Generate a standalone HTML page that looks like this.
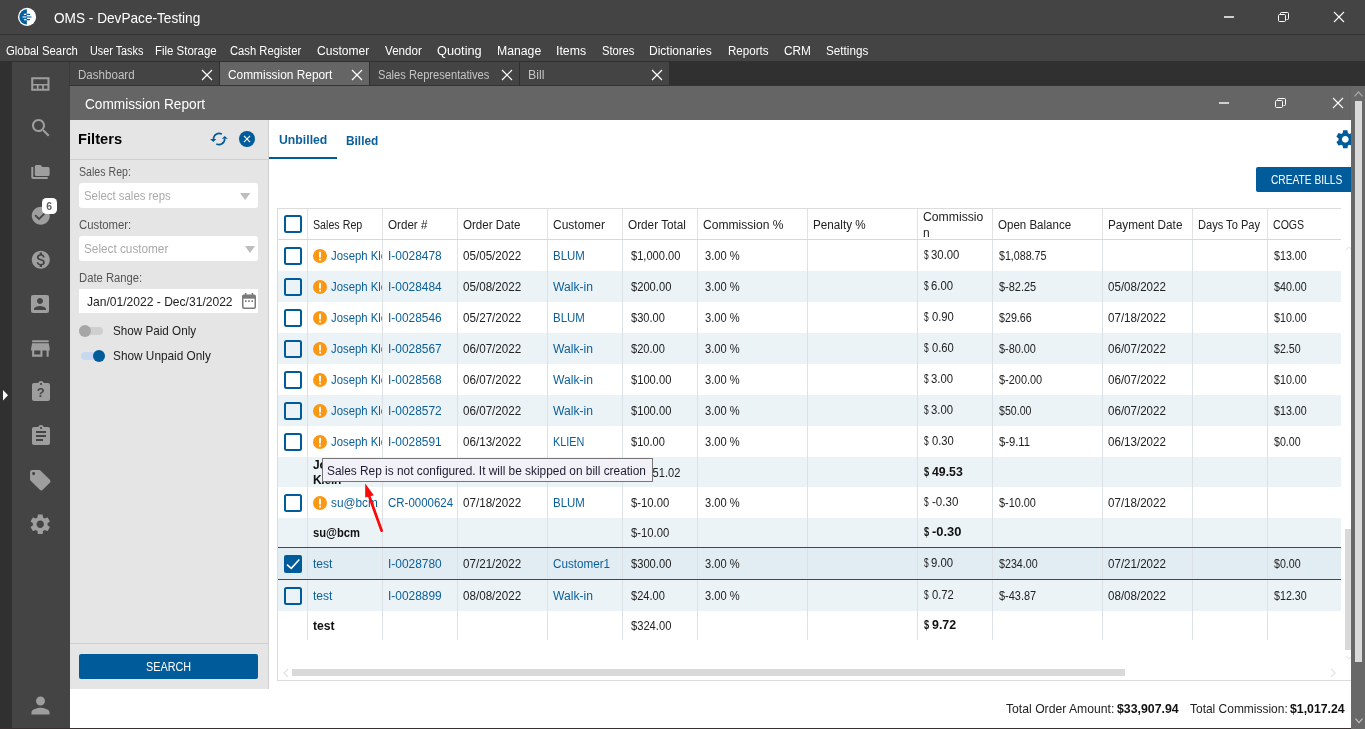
<!DOCTYPE html>
<html lang="en"><head><meta charset="utf-8"><title>OMS - DevPace-Testing</title>
<style>
html,body{margin:0;padding:0;}
body{width:1365px;height:729px;overflow:hidden;position:relative;background:#fff;font-family:"Liberation Sans", sans-serif;}
.t{position:absolute;white-space:pre;line-height:20px;height:20px;transform-origin:0 50%;}
svg{position:absolute;overflow:visible;}
#app{position:absolute;left:0;top:0;width:1365px;height:729px;overflow:hidden;will-change:transform;}
</style></head>
<body>
<div id="app">
<div style="position:absolute;left:0px;top:0px;width:1365px;height:35px;background:#444444;"></div>
<div style="position:absolute;left:0px;top:34px;width:1365px;height:1px;background:#333333;"></div>
<div style="position:absolute;left:0px;top:35px;width:1365px;height:26px;background:#444444;"></div>
<div style="position:absolute;left:0px;top:61px;width:1365px;height:668px;background:#303030;"></div>
<div style="position:absolute;left:12px;top:62px;width:58px;height:667px;background:#444444;"></div>
<div style="position:absolute;left:69px;top:62px;width:1px;height:24px;background:#3a3a3a;"></div>
<div style="position:absolute;left:70px;top:85px;width:1281px;height:1px;background:#333333;"></div>
<div style="position:absolute;left:70px;top:62px;width:149px;height:23px;background:#444444;"></div>
<div style="position:absolute;left:220px;top:62px;width:149px;height:23px;background:#656565;"></div>
<div style="position:absolute;left:370px;top:62px;width:149px;height:23px;background:#444444;"></div>
<div style="position:absolute;left:520px;top:62px;width:149px;height:23px;background:#444444;"></div>
<div style="position:absolute;left:70px;top:86px;width:1281px;height:34px;background:#656565;"></div>
<div style="position:absolute;left:70px;top:120px;width:1281px;height:609px;background:#ffffff;"></div>
<div style="position:absolute;left:70px;top:120px;width:198px;height:569px;background:#e5e5e5;"></div>
<div style="position:absolute;left:268px;top:120px;width:1px;height:569px;background:#cfcfcf;"></div>
<div style="position:absolute;left:70px;top:159px;width:198px;height:1px;background:#d0d0d0;"></div>
<div style="position:absolute;left:70px;top:643px;width:198px;height:1px;background:#d0d0d0;"></div>
<div style="position:absolute;left:0px;top:728px;width:1365px;height:1px;background:#3a2f2f;"></div>
<svg style="left:17px;top:7px" width="20" height="20" viewBox="0 0 20 20">
<circle cx="10.05" cy="9.9" r="9.1" fill="#ffffff"/>
<path d="M9.9 2.3 A7.6 7.6 0 0 0 9.9 17.5 Z" fill="#0560a0"/>
<g stroke-width="1.2" stroke-linecap="round"><path d="M7.4 7.45H9.9M7.4 12.6H9.9" stroke="#ffffff"/><path d="M9.9 7.45H12.6M9.9 12.6H12.6" stroke="#0560a0"/></g>
<g stroke-width="1.7" stroke-linecap="round" opacity="0.75"><path d="M6.2 10H9.9" stroke="#ffffff"/><path d="M9.9 10H13.8" stroke="#0560a0"/></g>
</svg>
<div style="position:absolute;left:1223.5px;top:16.1px;width:10.5px;height:1.6px;background:#cfcfcf"></div>
<svg style="left:1278px;top:12px" width="11" height="10" viewBox="0 0 11 10" fill="none" stroke="#ffffff" stroke-width="1">
<rect x="0.5" y="2.5" width="7" height="7" rx="1"/><path d="M2.5 2.5v-1a1 1 0 0 1 1-1h6a1 1 0 0 1 1 1v5a1 1 0 0 1 -1 1h-1"/></svg>
<svg style="left:1333.5px;top:12px" width="10" height="10" viewBox="0 0 10 10" stroke="#ffffff" stroke-width="1.1"><path d="M0 0L10 10M10 0L0 10"/></svg>
<div style="position:absolute;left:1218.5px;top:102.1px;width:10.5px;height:1.6px;background:#cfcfcf"></div>
<svg style="left:1275px;top:98px" width="11" height="10" viewBox="0 0 11 10" fill="none" stroke="#ffffff" stroke-width="1">
<rect x="0.5" y="2.5" width="7" height="7" rx="1"/><path d="M2.5 2.5v-1a1 1 0 0 1 1-1h6a1 1 0 0 1 1 1v5a1 1 0 0 1 -1 1h-1"/></svg>
<svg style="left:1332.5px;top:98px" width="10" height="10" viewBox="0 0 10 10" stroke="#ffffff" stroke-width="1.1"><path d="M0 0L10 10M10 0L0 10"/></svg>
<svg style="left:202px;top:69.7px" width="10" height="10" viewBox="0 0 10 10" stroke="#ffffff" stroke-width="1.2"><path d="M0 0L10 10M10 0L0 10"/></svg>
<svg style="left:352px;top:69.7px" width="10" height="10" viewBox="0 0 10 10" stroke="#ffffff" stroke-width="1.2"><path d="M0 0L10 10M10 0L0 10"/></svg>
<svg style="left:502px;top:69.7px" width="10" height="10" viewBox="0 0 10 10" stroke="#ffffff" stroke-width="1.2"><path d="M0 0L10 10M10 0L0 10"/></svg>
<svg style="left:652px;top:69.7px" width="10" height="10" viewBox="0 0 10 10" stroke="#ffffff" stroke-width="1.2"><path d="M0 0L10 10M10 0L0 10"/></svg>
<svg style="left:3px;top:389.5px" width="5" height="10.5" viewBox="0 0 5 10.5"><path d="M0 0L5 5.25L0 10.5Z" fill="#ffffff"/></svg>
<svg style="left:31.2px;top:76.9px" width="18.7" height="13.9" viewBox="0 0 18.3 13.9" preserveAspectRatio="none"><path fill="#9e9e9e" fill-rule="evenodd" d="M0.2 0.2H18.1V13.7H0.2Z M2.2 2.2V6.9H16.1V2.2Z M2.2 8.6V11.7H5.700V8.6Z M7.4 8.6V11.7H10.9V8.6Z M12.6 8.6V11.7H16.1V8.6Z"/></svg>
<svg style="left:28.5px;top:116px" width="24" height="24" viewBox="0 0 24 24" fill="#9e9e9e"><path d="M15.5 14h-.79l-.28-.27C15.41 12.59 16 11.11 16 9.5 16 5.91 13.09 3 9.5 3S3 5.91 3 9.5 5.91 16 9.5 16c1.61 0 3.09-.59 4.23-1.57l.27.28v.79l5 4.99L20.49 19l-4.99-5zm-6 0C7.01 14 5 11.99 5 9.5S7.01 5 9.5 5 14 7.01 14 9.5 11.99 14 9.5 14z"/></svg>
<svg style="left:30px;top:164px" width="21" height="16" viewBox="30 164 21 16" fill="#9e9e9e"><path d="M31.3 167H33.3V177.1H47.7V178.9H33a1.700 1.700 0 0 1-1.700-1.700Z"/><path d="M36.300 165.100H40.500L42.400 167H48.100a1.500 1.500 0 0 1 1.500 1.500V174.400a1.500 1.500 0 0 1-1.500 1.500H36.300a1.500 1.500 0 0 1-1.500-1.500V166.600a1.500 1.500 0 0 1 1.500-1.500Z"/></svg>
<svg style="left:29.5px;top:205.2px" width="21.6" height="21.6" viewBox="0 0 24 24" fill="#9e9e9e"><path d="M12 2C6.48 2 2 6.48 2 12s4.48 10 10 10 10-4.48 10-10S17.52 2 12 2zm-2 15l-5-5 1.41-1.41L10 14.17l7.59-7.59L19 8l-9 9z"/></svg>
<div style="position:absolute;left:42px;top:198.1px;width:15px;height:16.4px;background:#ffffff;border-radius:4.5px"></div>
<svg style="left:29.7px;top:249px" width="21.6" height="21.6" viewBox="0 0 24 24" fill="#9e9e9e"><path d="M12 2C6.48 2 2 6.48 2 12s4.48 10 10 10 10-4.48 10-10S17.52 2 12 2zm1.41 16.09V20h-2.67v-1.93c-1.71-.36-3.16-1.46-3.27-3.4h1.96c.1 1.05.82 1.87 2.65 1.87 1.96 0 2.4-.98 2.4-1.59 0-.83-.44-1.61-2.67-2.14-2.48-.6-4.18-1.62-4.18-3.67 0-1.72 1.39-2.84 3.11-3.21V4h2.67v1.95c1.86.45 2.79 1.86 2.85 3.39H14.3c-.05-1.11-.64-1.87-2.22-1.87-1.5 0-2.4.68-2.4 1.64 0 .84.65 1.39 2.67 1.91s4.18 1.39 4.18 3.91c-.01 1.83-1.38 2.83-3.12 3.16z"/></svg>
<svg style="left:28.4px;top:292px" width="24" height="24" viewBox="0 0 24 24" fill="#9e9e9e"><path d="M3 5v14c0 1.1.89 2 2 2h14c1.1 0 2-.9 2-2V5c0-1.1-.9-2-2-2H5c-1.11 0-2 .9-2 2zm12 4c0 1.66-1.34 3-3 3s-3-1.34-3-3 1.34-3 3-3 3 1.34 3 3zm-9 8c0-2 4-3.1 6-3.1s6 1.1 6 3.1v1H6v-1z"/></svg>
<svg style="left:28px;top:335.8px" width="24.8" height="24.8" viewBox="0 0 24 24" fill="#9e9e9e"><path d="M20 4H4v2h16V4zm1 10v-2l-1-5H4l-1 5v2h1v6h10v-6h4v6h2v-6h1zm-9 4H6v-4h6v4z"/></svg>
<svg style="left:28.5px;top:380px" width="24" height="24" viewBox="0 0 24 24" fill="#9e9e9e"><path d="M19 3h-4.18C14.4 1.84 13.3 1 12 1c-1.3 0-2.4.84-2.82 2H5c-1.1 0-2 .9-2 2v14c0 1.1.9 2 2 2h14c1.1 0 2-.9 2-2V5c0-1.1-.9-2-2-2zm-7 0c.55 0 1 .45 1 1s-.45 1-1 1-1-.45-1-1 .45-1 1-1z" fill-rule="evenodd"/></svg>
<svg style="left:28.5px;top:424px" width="24" height="24" viewBox="0 0 24 24" fill="#9e9e9e"><path d="M19 3h-4.18C14.4 1.84 13.3 1 12 1c-1.3 0-2.4.84-2.82 2H5c-1.1 0-2 .9-2 2v14c0 1.1.9 2 2 2h14c1.1 0 2-.9 2-2V5c0-1.1-.9-2-2-2zm-7 0c.55 0 1 .45 1 1s-.45 1-1 1-1-.45-1-1 .45-1 1-1zm2 14H7v-2h7v2zm3-4H7v-2h10v2zm0-4H7V7h10v2z"/></svg>
<svg style="left:28.05px;top:467.75px" width="24.5" height="24.5" viewBox="0 0 24 24" fill="#9e9e9e"><path d="M21.41 11.58l-9-9C12.05 2.22 11.55 2 11 2H4c-1.1 0-2 .9-2 2v7c0 .55.22 1.05.59 1.42l9 9c.36.36.86.58 1.41.58.55 0 1.05-.22 1.41-.59l7-7c.37-.36.59-.86.59-1.41 0-.55-.23-1.06-.59-1.42zM5.500 7C4.67 7 4 6.330 4 5.500S4.67 4 5.500 4 7 4.67 7 5.500 6.330 7 5.500 7z"/></svg>
<svg style="left:28.35px;top:511.85px" width="24.5" height="24.5" viewBox="0 0 24 24" fill="#9e9e9e"><path d="M19.14 12.94c.04-.3.06-.61.06-.94 0-.32-.02-.64-.07-.94l2.030-1.58c.18-.14.23-.41.12-.61l-1.920-3.320c-.12-.22-.37-.29-.59-.22l-2.390.96c-.5-.38-1.030-.7-1.620-.94l-.36-2.540c-.04-.24-.24-.41-.48-.41h-3.840c-.24 0-.43.17-.47.41l-.36 2.540c-.59.24-1.130.57-1.620.94l-2.390-.96c-.22-.08-.47 0-.59.22L2.740 8.870c-.12.210-.08.470.12.610l2.030 1.580c-.05.3-.09.630-.09.940s.02.640.07.940l-2.030 1.580c-.18.140-.23.410-.12.610l1.920 3.320c.12.220.37.290.59.220l2.390-.96c.5.380 1.030.7 1.620.94l.36 2.540c.05.240.24.410.48.410h3.840c.24 0 .44-.17.470-.41l.36-2.540c.59-.24 1.130-.56 1.620-.94l2.390.96c.22.080.47 0 .59-.22l1.920-3.320c.12-.22.070-.47-.12-.61l-2.010-1.580zM12 15.600c-1.980 0-3.600-1.620-3.600-3.600s1.620-3.600 3.600-3.600 3.600 1.620 3.600 3.600-1.620 3.600-3.600 3.600z"/></svg>
<svg style="left:27px;top:692px" width="27" height="27" viewBox="0 0 24 24" fill="#9e9e9e"><path d="M12 12c2.210 0 4-1.790 4-4s-1.790-4-4-4-4 1.790-4 4 1.790 4 4 4zm0 2c-2.670 0-8 1.340-8 4v2h16v-2c0-2.660-5.330-4-8-4z"/></svg>
<svg style="left:210px;top:131px" width="18" height="16" viewBox="0 0 18 16" fill="none" stroke="#005b9a" stroke-width="1.6">
<path d="M3.5 8.2A5.6 5.6 0 0 1 11.9 3.15"/><path d="M14.7 7.8A5.6 5.6 0 0 1 6.3 12.85"/>
<path d="M0.1 8L6.3 8L3.3 11.1Z" fill="#005b9a" stroke="none"/><path d="M14.7 4.9L17.8 7.8L11.9 7.8Z" fill="#005b9a" stroke="none"/></svg>
<svg style="left:239px;top:131px" width="16" height="16" viewBox="0 0 16 16"><circle cx="8" cy="8" r="8" fill="#005b9a"/>
<path d="M4.95 4.95L11.05 11.05M11.05 4.95L4.95 11.05" stroke="#ffffff" stroke-width="1.15"/></svg>
<div style="position:absolute;left:79px;top:183px;width:179px;height:25px;background:#ffffff;border-radius:3px;"></div>
<svg style="left:240.4px;top:193.3px" width="10.3" height="7" viewBox="0 0 10.3 7"><path d="M0 0H10.3L5.15 7Z" fill="#bdbdbd"/></svg>
<div style="position:absolute;left:79px;top:236px;width:179px;height:25px;background:#ffffff;border-radius:3px;"></div>
<svg style="left:244.5px;top:246.3px" width="10" height="7" viewBox="0 0 10 7"><path d="M0 0H10L5 7Z" fill="#bdbdbd"/></svg>
<div style="position:absolute;left:79px;top:289px;width:179px;height:24px;background:#ffffff;"></div>
<svg style="left:242px;top:293px" width="14" height="16" viewBox="0 0 14 16" fill="none" stroke="#7a7a7a">
<rect x="0.75" y="2.25" width="12.5" height="13" rx="1.2" stroke-width="1.5"/><path d="M0.75 4.2H13.25" stroke-width="3"/><path d="M3.6 0V3M10.4 0V3" stroke-width="1.6"/>
<path d="M3 8.200H4.600M6.200 8.200H7.800M9.400 8.200H11" stroke-width="1.700"/></svg>
<div style="position:absolute;left:79px;top:326.5px;width:24px;height:8px;background:#cfcfcf;border-radius:4px;"></div>
<div style="position:absolute;left:79px;top:324.5px;width:12px;height:12px;border-radius:6px;background:#a6a6a6"></div>
<div style="position:absolute;left:81px;top:351.5px;width:24px;height:8px;background:#c9d8f2;border-radius:4px;"></div>
<div style="position:absolute;left:93px;top:349.5px;width:12px;height:12px;border-radius:6px;background:#005b9a"></div>
<div style="position:absolute;left:79px;top:654px;width:179px;height:25px;background:#005b9a;border-radius:2px;"></div>
<div style="position:absolute;left:269px;top:157px;width:67.5px;height:2px;background:#005b9a;"></div>
<svg style="left:1333.7px;top:128.1px" width="22.6" height="22.6" viewBox="0 0 24 24" fill="#005b9a"><path d="M19.14 12.94c.04-.3.06-.61.06-.94 0-.32-.02-.64-.07-.94l2.030-1.58c.18-.14.23-.41.12-.61l-1.920-3.320c-.12-.22-.37-.29-.59-.22l-2.390.96c-.5-.38-1.030-.7-1.620-.94l-.36-2.540c-.04-.24-.24-.41-.48-.41h-3.840c-.24 0-.43.17-.47.41l-.36 2.540c-.59.24-1.130.57-1.620.94l-2.390-.96c-.22-.08-.47 0-.59.22L2.740 8.870c-.12.210-.08.470.12.610l2.030 1.580c-.05.3-.09.630-.09.940s.02.640.07.940l-2.030 1.580c-.18.140-.23.410-.12.610l1.920 3.320c.12.220.37.290.59.220l2.390-.96c.5.380 1.030.7 1.620.94l.36 2.540c.05.240.24.410.48.410h3.840c.24 0 .44-.17.470-.41l.36-2.540c.59-.24 1.130-.56 1.620-.94l2.390.96c.22.080.47 0 .59-.22l1.920-3.320c.12-.22.070-.47-.12-.61l-2.010-1.580zM12 15.600c-1.980 0-3.600-1.620-3.600-3.600s1.620-3.600 3.600-3.600 3.600 1.620 3.600 3.600-1.620 3.600-3.600 3.600z"/></svg>
<div style="position:absolute;left:1256px;top:167px;width:110px;height:25px;background:#005b9a;border-radius:2px;"></div>
<div style="position:absolute;left:277px;top:208px;width:1064px;height:1px;background:#dcdcdc;"></div>
<div style="position:absolute;left:277px;top:208px;width:1px;height:472px;background:#dcdcdc;"></div>
<div style="position:absolute;left:277px;top:679.5px;width:1090px;height:1px;background:#dcdcdc;"></div>
<div style="position:absolute;left:278px;top:239px;width:1063px;height:1px;background:#d9d9d9;"></div>
<div style="position:absolute;left:278px;top:271px;width:1063px;height:31px;background:#ebf3f7;"></div>
<div style="position:absolute;left:278px;top:333px;width:1063px;height:31px;background:#ebf3f7;"></div>
<div style="position:absolute;left:278px;top:395px;width:1063px;height:31px;background:#ebf3f7;"></div>
<div style="position:absolute;left:278px;top:457px;width:1063px;height:30px;background:#ebf3f7;"></div>
<div style="position:absolute;left:278px;top:518px;width:1063px;height:30px;background:#ebf3f7;"></div>
<div style="position:absolute;left:278px;top:548px;width:1063px;height:31px;background:#e1ecf3;"></div>
<div style="position:absolute;left:278px;top:579px;width:1063px;height:32px;background:#ebf3f7;"></div>
<div style="position:absolute;left:307px;top:209px;width:1px;height:30px;background:#e0e2e4;"></div>
<div style="position:absolute;left:307px;top:240px;width:1px;height:400px;background:#dce1e5;"></div>
<div style="position:absolute;left:382px;top:209px;width:1px;height:30px;background:#e0e2e4;"></div>
<div style="position:absolute;left:382px;top:240px;width:1px;height:400px;background:#dce1e5;"></div>
<div style="position:absolute;left:457px;top:209px;width:1px;height:30px;background:#e0e2e4;"></div>
<div style="position:absolute;left:457px;top:240px;width:1px;height:400px;background:#dce1e5;"></div>
<div style="position:absolute;left:547px;top:209px;width:1px;height:30px;background:#e0e2e4;"></div>
<div style="position:absolute;left:547px;top:240px;width:1px;height:400px;background:#dce1e5;"></div>
<div style="position:absolute;left:622px;top:209px;width:1px;height:30px;background:#e0e2e4;"></div>
<div style="position:absolute;left:622px;top:240px;width:1px;height:400px;background:#dce1e5;"></div>
<div style="position:absolute;left:697px;top:209px;width:1px;height:30px;background:#e0e2e4;"></div>
<div style="position:absolute;left:697px;top:240px;width:1px;height:400px;background:#dce1e5;"></div>
<div style="position:absolute;left:807px;top:209px;width:1px;height:30px;background:#e0e2e4;"></div>
<div style="position:absolute;left:807px;top:240px;width:1px;height:400px;background:#dce1e5;"></div>
<div style="position:absolute;left:917px;top:209px;width:1px;height:30px;background:#e0e2e4;"></div>
<div style="position:absolute;left:917px;top:240px;width:1px;height:400px;background:#dce1e5;"></div>
<div style="position:absolute;left:992px;top:209px;width:1px;height:30px;background:#e0e2e4;"></div>
<div style="position:absolute;left:992px;top:240px;width:1px;height:400px;background:#dce1e5;"></div>
<div style="position:absolute;left:1102px;top:209px;width:1px;height:30px;background:#e0e2e4;"></div>
<div style="position:absolute;left:1102px;top:240px;width:1px;height:400px;background:#dce1e5;"></div>
<div style="position:absolute;left:1192px;top:209px;width:1px;height:30px;background:#e0e2e4;"></div>
<div style="position:absolute;left:1192px;top:240px;width:1px;height:400px;background:#dce1e5;"></div>
<div style="position:absolute;left:1267px;top:209px;width:1px;height:30px;background:#e0e2e4;"></div>
<div style="position:absolute;left:1267px;top:240px;width:1px;height:400px;background:#dce1e5;"></div>
<div style="position:absolute;left:278px;top:547px;width:1063px;height:1px;background:#005b9a;"></div>
<div style="position:absolute;left:278px;top:579px;width:1063px;height:1px;background:#005b9a;"></div>
<div style="position:absolute;left:284px;top:215px;width:14px;height:14px;border:2px solid #005b9a;border-radius:2.5px"></div>
<div style="position:absolute;left:284px;top:247px;width:14px;height:14px;border:2px solid #005b9a;border-radius:2.5px"></div>
<svg style="left:313px;top:248.5px" width="14" height="14" viewBox="0 0 14 14"><circle cx="7" cy="7" r="7" fill="#fb9712"/><path d="M7 2.7V8.4" stroke="#ffffff" stroke-width="1.9"/><rect x="6.05" y="9.6" width="1.9" height="1.9" fill="#ffffff"/></svg>
<div style="position:absolute;left:284px;top:278px;width:14px;height:14px;border:2px solid #005b9a;border-radius:2.5px"></div>
<svg style="left:313px;top:279.5px" width="14" height="14" viewBox="0 0 14 14"><circle cx="7" cy="7" r="7" fill="#fb9712"/><path d="M7 2.7V8.4" stroke="#ffffff" stroke-width="1.9"/><rect x="6.05" y="9.6" width="1.9" height="1.9" fill="#ffffff"/></svg>
<div style="position:absolute;left:284px;top:309px;width:14px;height:14px;border:2px solid #005b9a;border-radius:2.5px"></div>
<svg style="left:313px;top:310.5px" width="14" height="14" viewBox="0 0 14 14"><circle cx="7" cy="7" r="7" fill="#fb9712"/><path d="M7 2.7V8.4" stroke="#ffffff" stroke-width="1.9"/><rect x="6.05" y="9.6" width="1.9" height="1.9" fill="#ffffff"/></svg>
<div style="position:absolute;left:284px;top:340px;width:14px;height:14px;border:2px solid #005b9a;border-radius:2.5px"></div>
<svg style="left:313px;top:341.5px" width="14" height="14" viewBox="0 0 14 14"><circle cx="7" cy="7" r="7" fill="#fb9712"/><path d="M7 2.7V8.4" stroke="#ffffff" stroke-width="1.9"/><rect x="6.05" y="9.6" width="1.9" height="1.9" fill="#ffffff"/></svg>
<div style="position:absolute;left:284px;top:371px;width:14px;height:14px;border:2px solid #005b9a;border-radius:2.5px"></div>
<svg style="left:313px;top:372.5px" width="14" height="14" viewBox="0 0 14 14"><circle cx="7" cy="7" r="7" fill="#fb9712"/><path d="M7 2.7V8.4" stroke="#ffffff" stroke-width="1.9"/><rect x="6.05" y="9.6" width="1.9" height="1.9" fill="#ffffff"/></svg>
<div style="position:absolute;left:284px;top:402px;width:14px;height:14px;border:2px solid #005b9a;border-radius:2.5px"></div>
<svg style="left:313px;top:403.5px" width="14" height="14" viewBox="0 0 14 14"><circle cx="7" cy="7" r="7" fill="#fb9712"/><path d="M7 2.7V8.4" stroke="#ffffff" stroke-width="1.9"/><rect x="6.05" y="9.6" width="1.9" height="1.9" fill="#ffffff"/></svg>
<div style="position:absolute;left:284px;top:433px;width:14px;height:14px;border:2px solid #005b9a;border-radius:2.5px"></div>
<svg style="left:313px;top:434.5px" width="14" height="14" viewBox="0 0 14 14"><circle cx="7" cy="7" r="7" fill="#fb9712"/><path d="M7 2.7V8.4" stroke="#ffffff" stroke-width="1.9"/><rect x="6.05" y="9.6" width="1.9" height="1.9" fill="#ffffff"/></svg>
<div style="position:absolute;left:284px;top:494px;width:14px;height:14px;border:2px solid #005b9a;border-radius:2.5px"></div>
<svg style="left:313px;top:495.5px" width="14" height="14" viewBox="0 0 14 14"><circle cx="7" cy="7" r="7" fill="#fb9712"/><path d="M7 2.7V8.4" stroke="#ffffff" stroke-width="1.9"/><rect x="6.05" y="9.6" width="1.9" height="1.9" fill="#ffffff"/></svg>
<svg style="left:284px;top:555px" width="18" height="18" viewBox="0 0 18 18"><rect width="18" height="18" rx="2" fill="#005b9a"/><path d="M2.9 9.6L7.3 13.3L15.3 4.5" fill="none" stroke="#ffffff" stroke-width="1.6"/></svg>
<div style="position:absolute;left:284px;top:587px;width:14px;height:14px;border:2px solid #005b9a;border-radius:2.5px"></div>
<div style="position:absolute;left:292px;top:669px;width:833px;height:7px;background:#d9d9d9;"></div>
<div style="position:absolute;left:1345px;top:529px;width:7px;height:121px;background:#d9d9d9;"></div>
<svg style="left:283px;top:667.5px" width="6" height="10" viewBox="0 0 6 10" fill="none" stroke="#e2e2e2" stroke-width="1.2"><path d="M5 0.8L1 5L5 9.2"/></svg>
<svg style="left:1330px;top:667.5px" width="6" height="10" viewBox="0 0 6 10" fill="none" stroke="#e2e2e2" stroke-width="1.2"><path d="M1 0.8L5 5L1 9.2"/></svg>
<svg style="left:1344.5px;top:245.5px" width="8" height="5" viewBox="0 0 9 6" fill="none" stroke="#e2e2e2" stroke-width="1.2"><path d="M0.5 5.3L4.5 1L8.5 5.3"/></svg>
<svg style="left:1344.5px;top:655px" width="8" height="5" viewBox="0 0 9 6" fill="none" stroke="#e2e2e2" stroke-width="1.2"><path d="M0.5 0.7L4.5 5L8.5 0.7"/></svg>
<span class="t" style="left:53.55px;top:8.1px;font-size:15px;color:#ffffff;transform:scaleX(0.9091);">OMS - DevPace-Testing</span>
<span class="t" style="left:6.03px;top:40.9px;font-size:12px;color:#ffffff;transform:scaleX(0.9453);">Global Search</span>
<span class="t" style="left:89.62px;top:40.9px;font-size:12px;color:#ffffff;transform:scaleX(0.9017);">User Tasks</span>
<span class="t" style="left:154.69px;top:40.9px;font-size:12px;color:#ffffff;transform:scaleX(0.9528);">File Storage</span>
<span class="t" style="left:229.83px;top:40.9px;font-size:12px;color:#ffffff;transform:scaleX(0.9364);">Cash Register</span>
<span class="t" style="left:316.9px;top:40.9px;font-size:12px;color:#ffffff;transform:scaleX(1.0058);">Customer</span>
<span class="t" style="left:385.1px;top:40.9px;font-size:12px;color:#ffffff;transform:scaleX(0.9711);">Vendor</span>
<span class="t" style="left:437.37px;top:40.9px;font-size:12px;color:#ffffff;transform:scaleX(1.0634);">Quoting</span>
<span class="t" style="left:497.13px;top:40.9px;font-size:12px;color:#ffffff;transform:scaleX(1.0201);">Manage</span>
<span class="t" style="left:556.33px;top:40.9px;font-size:12px;color:#ffffff;transform:scaleX(1.0265);">Items</span>
<span class="t" style="left:601.73px;top:40.9px;font-size:12px;color:#ffffff;transform:scaleX(0.9324);">Stores</span>
<span class="t" style="left:649.45px;top:40.9px;font-size:12px;color:#ffffff;transform:scaleX(0.9992);">Dictionaries</span>
<span class="t" style="left:727.58px;top:40.9px;font-size:12px;color:#ffffff;transform:scaleX(0.9634);">Reports</span>
<span class="t" style="left:783.71px;top:40.9px;font-size:12px;color:#ffffff;transform:scaleX(0.9846);">CRM</span>
<span class="t" style="left:825.91px;top:40.9px;font-size:12px;color:#ffffff;transform:scaleX(0.9741);">Settings</span>
<span class="t" style="left:77.88px;top:64.7px;font-size:12px;color:#c4c4c4;transform:scaleX(0.9652);">Dashboard</span>
<span class="t" style="left:228.1px;top:64.7px;font-size:12px;color:#ffffff;transform:scaleX(0.9905);">Commission Report</span>
<span class="t" style="left:378.14px;top:64.7px;font-size:12px;color:#c4c4c4;transform:scaleX(0.9275);">Sales Representatives</span>
<span class="t" style="left:527.83px;top:64.7px;font-size:12px;color:#c4c4c4;transform:scaleX(1.0305);">Bill</span>
<span class="t" style="left:84.51px;top:94.3px;font-size:14px;color:#ffffff;transform:scaleX(0.9763);">Commission Report</span>
<span class="t" style="left:46.35px;top:196.3px;font-size:10.5px;color:#606060;font-weight:700;">6</span>
<span class="t" style="left:36.7px;top:383.3px;font-size:13px;color:#444444;font-weight:700;">?</span>
<span class="t" style="left:78.32px;top:129.4px;font-size:15px;color:#000000;font-weight:700;transform:scaleX(0.9793);">Filters</span>
<span class="t" style="left:78.86px;top:162.2px;font-size:12px;color:#555555;transform:scaleX(0.8838);">Sales Rep:</span>
<span class="t" style="left:83.53px;top:185.8px;font-size:12px;color:#a9a9a9;transform:scaleX(0.9492);">Select sales reps</span>
<span class="t" style="left:78.83px;top:215.1px;font-size:12px;color:#555555;transform:scaleX(0.9444);">Customer:</span>
<span class="t" style="left:83.51px;top:238.7px;font-size:12px;color:#a9a9a9;transform:scaleX(0.9801);">Select customer</span>
<span class="t" style="left:78.8px;top:268.1px;font-size:12px;color:#555555;transform:scaleX(0.9384);">Date Range:</span>
<span class="t" style="left:86.67px;top:291.6px;font-size:13px;color:#222222;transform:scaleX(0.9282);">Jan/01/2022 - Dec/31/2022</span>
<span class="t" style="left:112.75px;top:320.6px;font-size:13px;color:#222222;transform:scaleX(0.8989);">Show Paid Only</span>
<span class="t" style="left:112.75px;top:345.6px;font-size:13px;color:#222222;transform:scaleX(0.9091);">Show Unpaid Only</span>
<span class="t" style="left:146.35px;top:656.6px;font-size:12px;color:#ffffff;transform:scaleX(0.9026);">SEARCH</span>
<span class="t" style="left:278.69px;top:129.6px;font-size:13px;color:#0b5f99;font-weight:700;transform:scaleX(0.9427);">Unbilled</span>
<span class="t" style="left:346.42px;top:130.6px;font-size:13px;color:#0b5f99;font-weight:700;transform:scaleX(0.9126);">Billed</span>
<span class="t" style="left:1271.08px;top:169.7px;font-size:12px;color:#ffffff;transform:scaleX(0.8494);">CREATE BILLS</span>
<span class="t" style="left:312.56px;top:214.8px;font-size:12px;color:#222222;transform:scaleX(0.8899);">Sales Rep</span>
<span class="t" style="left:388.02px;top:214.8px;font-size:12px;color:#222222;transform:scaleX(0.9689);">Order #</span>
<span class="t" style="left:462.92px;top:214.8px;font-size:12px;color:#222222;transform:scaleX(0.9658);">Order Date</span>
<span class="t" style="left:552.9px;top:214.8px;font-size:12px;color:#222222;transform:scaleX(0.9981);">Customer</span>
<span class="t" style="left:628.11px;top:214.8px;font-size:12px;color:#222222;transform:scaleX(0.9803);">Order Total</span>
<span class="t" style="left:702.9px;top:214.8px;font-size:12px;color:#222222;transform:scaleX(1.0057);">Commission %</span>
<span class="t" style="left:812.67px;top:214.8px;font-size:12px;color:#222222;transform:scaleX(0.9755);">Penalty %</span>
<span class="t" style="left:998.12px;top:214.8px;font-size:12px;color:#222222;transform:scaleX(0.9608);">Open Balance</span>
<span class="t" style="left:1107.57px;top:214.8px;font-size:12px;color:#222222;transform:scaleX(0.9787);">Payment Date</span>
<span class="t" style="left:1197.91px;top:214.8px;font-size:12px;color:#222222;transform:scaleX(0.9233);">Days To Pay</span>
<span class="t" style="left:1273.06px;top:214.8px;font-size:12px;color:#222222;transform:scaleX(0.8812);">COGS</span>
<span class="t" style="left:922.89px;top:207px;font-size:12px;color:#222222;transform:scaleX(1.0171);">Commissio</span>
<span class="t" style="left:922.9px;top:222.6px;font-size:12px;color:#222222;">n</span>
<span class="t" style="left:331.0px;top:245.8px;font-size:12px;color:#0b5f99;transform:scaleX(0.9451);width:53.96px;overflow:hidden;">Joseph Klein</span>
<span class="t" style="left:387.65px;top:245.8px;font-size:12px;color:#0b5f99;transform:scaleX(0.9943);">I-0028478</span>
<span class="t" style="left:462.56px;top:245.8px;font-size:12px;color:#222222;transform:scaleX(0.9697);">05/05/2022</span>
<span class="t" style="left:552.69px;top:245.8px;font-size:12px;color:#0b5f99;transform:scaleX(0.9531);">BLUM</span>
<span class="t" style="left:630.8px;top:245.8px;font-size:12px;color:#222222;transform:scaleX(0.9255);">$1,000.00</span>
<span class="t" style="left:704.64px;top:245.8px;font-size:12px;color:#222222;transform:scaleX(0.9288);">3.00 %</span>
<span class="t" style="left:923.7px;top:245px;font-size:12px;color:#222222;transform:scaleX(0.6963);">$</span>
<span class="t" style="left:931.43px;top:245px;font-size:12px;color:#222222;transform:scaleX(0.947);">30.00</span>
<span class="t" style="left:998.6px;top:245.8px;font-size:12px;color:#222222;transform:scaleX(0.8885);">$1,088.75</span>
<span class="t" style="left:1273.5px;top:245.8px;font-size:12px;color:#222222;transform:scaleX(0.8904);">$13.00</span>
<span class="t" style="left:331.0px;top:276.8px;font-size:12px;color:#0b5f99;transform:scaleX(0.9451);width:53.96px;overflow:hidden;">Joseph Klein</span>
<span class="t" style="left:387.65px;top:276.8px;font-size:12px;color:#0b5f99;transform:scaleX(0.9943);">I-0028484</span>
<span class="t" style="left:462.56px;top:276.8px;font-size:12px;color:#222222;transform:scaleX(0.9697);">05/08/2022</span>
<span class="t" style="left:553.4px;top:276.8px;font-size:12px;color:#0b5f99;transform:scaleX(1.0128);">Walk-in</span>
<span class="t" style="left:630.8px;top:276.8px;font-size:12px;color:#222222;transform:scaleX(0.9302);">$200.00</span>
<span class="t" style="left:704.64px;top:276.8px;font-size:12px;color:#222222;transform:scaleX(0.9288);">3.00 %</span>
<span class="t" style="left:923.7px;top:276px;font-size:12px;color:#222222;transform:scaleX(0.6963);">$</span>
<span class="t" style="left:931.43px;top:276px;font-size:12px;color:#222222;transform:scaleX(0.9444);">6.00</span>
<span class="t" style="left:998.6px;top:276.8px;font-size:12px;color:#222222;transform:scaleX(0.913);">$-82.25</span>
<span class="t" style="left:1108.06px;top:276.8px;font-size:12px;color:#222222;transform:scaleX(0.9647);">05/08/2022</span>
<span class="t" style="left:1273.5px;top:276.8px;font-size:12px;color:#222222;transform:scaleX(0.8904);">$40.00</span>
<span class="t" style="left:331.0px;top:307.8px;font-size:12px;color:#0b5f99;transform:scaleX(0.9451);width:53.96px;overflow:hidden;">Joseph Klein</span>
<span class="t" style="left:387.65px;top:307.8px;font-size:12px;color:#0b5f99;transform:scaleX(0.9943);">I-0028546</span>
<span class="t" style="left:462.56px;top:307.8px;font-size:12px;color:#222222;transform:scaleX(0.9697);">05/27/2022</span>
<span class="t" style="left:552.69px;top:307.8px;font-size:12px;color:#0b5f99;transform:scaleX(0.9531);">BLUM</span>
<span class="t" style="left:630.8px;top:307.8px;font-size:12px;color:#222222;transform:scaleX(0.9219);">$30.00</span>
<span class="t" style="left:704.64px;top:307.8px;font-size:12px;color:#222222;transform:scaleX(0.9288);">3.00 %</span>
<span class="t" style="left:923.7px;top:307px;font-size:12px;color:#222222;transform:scaleX(0.6963);">$</span>
<span class="t" style="left:931.67px;top:307px;font-size:12px;color:#222222;transform:scaleX(0.9341);">0.90</span>
<span class="t" style="left:998.6px;top:307.8px;font-size:12px;color:#222222;transform:scaleX(0.8897);">$29.66</span>
<span class="t" style="left:1108.06px;top:307.8px;font-size:12px;color:#222222;transform:scaleX(0.9647);">07/18/2022</span>
<span class="t" style="left:1273.5px;top:307.8px;font-size:12px;color:#222222;transform:scaleX(0.8904);">$10.00</span>
<span class="t" style="left:331.0px;top:338.8px;font-size:12px;color:#0b5f99;transform:scaleX(0.9451);width:53.96px;overflow:hidden;">Joseph Klein</span>
<span class="t" style="left:387.65px;top:338.8px;font-size:12px;color:#0b5f99;transform:scaleX(0.9943);">I-0028567</span>
<span class="t" style="left:462.56px;top:338.8px;font-size:12px;color:#222222;transform:scaleX(0.9697);">06/07/2022</span>
<span class="t" style="left:553.4px;top:338.8px;font-size:12px;color:#0b5f99;transform:scaleX(1.0128);">Walk-in</span>
<span class="t" style="left:630.8px;top:338.8px;font-size:12px;color:#222222;transform:scaleX(0.9219);">$20.00</span>
<span class="t" style="left:704.64px;top:338.8px;font-size:12px;color:#222222;transform:scaleX(0.9288);">3.00 %</span>
<span class="t" style="left:923.7px;top:338px;font-size:12px;color:#222222;transform:scaleX(0.6963);">$</span>
<span class="t" style="left:931.67px;top:338px;font-size:12px;color:#222222;transform:scaleX(0.9341);">0.60</span>
<span class="t" style="left:998.6px;top:338.8px;font-size:12px;color:#222222;transform:scaleX(0.9074);">$-80.00</span>
<span class="t" style="left:1108.06px;top:338.8px;font-size:12px;color:#222222;transform:scaleX(0.9647);">06/07/2022</span>
<span class="t" style="left:1273.5px;top:338.8px;font-size:12px;color:#222222;transform:scaleX(0.8867);">$2.50</span>
<span class="t" style="left:331.0px;top:369.8px;font-size:12px;color:#0b5f99;transform:scaleX(0.9451);width:53.96px;overflow:hidden;">Joseph Klein</span>
<span class="t" style="left:387.65px;top:369.8px;font-size:12px;color:#0b5f99;transform:scaleX(0.9943);">I-0028568</span>
<span class="t" style="left:462.56px;top:369.8px;font-size:12px;color:#222222;transform:scaleX(0.9697);">06/07/2022</span>
<span class="t" style="left:553.4px;top:369.8px;font-size:12px;color:#0b5f99;transform:scaleX(1.0128);">Walk-in</span>
<span class="t" style="left:630.8px;top:369.8px;font-size:12px;color:#222222;transform:scaleX(0.9302);">$100.00</span>
<span class="t" style="left:704.64px;top:369.8px;font-size:12px;color:#222222;transform:scaleX(0.9288);">3.00 %</span>
<span class="t" style="left:923.7px;top:369px;font-size:12px;color:#222222;transform:scaleX(0.6963);">$</span>
<span class="t" style="left:931.43px;top:369px;font-size:12px;color:#222222;transform:scaleX(0.9444);">3.00</span>
<span class="t" style="left:998.6px;top:369.8px;font-size:12px;color:#222222;transform:scaleX(0.9111);">$-200.00</span>
<span class="t" style="left:1108.06px;top:369.8px;font-size:12px;color:#222222;transform:scaleX(0.9647);">06/07/2022</span>
<span class="t" style="left:1273.5px;top:369.8px;font-size:12px;color:#222222;transform:scaleX(0.8904);">$10.00</span>
<span class="t" style="left:331.0px;top:400.8px;font-size:12px;color:#0b5f99;transform:scaleX(0.9451);width:53.96px;overflow:hidden;">Joseph Klein</span>
<span class="t" style="left:387.65px;top:400.8px;font-size:12px;color:#0b5f99;transform:scaleX(0.9943);">I-0028572</span>
<span class="t" style="left:462.56px;top:400.8px;font-size:12px;color:#222222;transform:scaleX(0.9697);">06/07/2022</span>
<span class="t" style="left:553.4px;top:400.8px;font-size:12px;color:#0b5f99;transform:scaleX(1.0128);">Walk-in</span>
<span class="t" style="left:630.8px;top:400.8px;font-size:12px;color:#222222;transform:scaleX(0.9302);">$100.00</span>
<span class="t" style="left:704.64px;top:400.8px;font-size:12px;color:#222222;transform:scaleX(0.9288);">3.00 %</span>
<span class="t" style="left:923.7px;top:400px;font-size:12px;color:#222222;transform:scaleX(0.6963);">$</span>
<span class="t" style="left:931.43px;top:400px;font-size:12px;color:#222222;transform:scaleX(0.9444);">3.00</span>
<span class="t" style="left:998.6px;top:400.8px;font-size:12px;color:#222222;transform:scaleX(0.8836);">$50.00</span>
<span class="t" style="left:1108.06px;top:400.8px;font-size:12px;color:#222222;transform:scaleX(0.9647);">06/07/2022</span>
<span class="t" style="left:1273.5px;top:400.8px;font-size:12px;color:#222222;transform:scaleX(0.8904);">$13.00</span>
<span class="t" style="left:331.0px;top:431.8px;font-size:12px;color:#0b5f99;transform:scaleX(0.9451);width:53.96px;overflow:hidden;">Joseph Klein</span>
<span class="t" style="left:387.65px;top:431.8px;font-size:12px;color:#0b5f99;transform:scaleX(0.9943);">I-0028591</span>
<span class="t" style="left:462.56px;top:431.8px;font-size:12px;color:#222222;transform:scaleX(0.9697);">06/13/2022</span>
<span class="t" style="left:552.72px;top:431.8px;font-size:12px;color:#0b5f99;transform:scaleX(0.9053);">KLIEN</span>
<span class="t" style="left:630.8px;top:431.8px;font-size:12px;color:#222222;transform:scaleX(0.9219);">$10.00</span>
<span class="t" style="left:704.64px;top:431.8px;font-size:12px;color:#222222;transform:scaleX(0.9288);">3.00 %</span>
<span class="t" style="left:923.7px;top:431px;font-size:12px;color:#222222;transform:scaleX(0.6963);">$</span>
<span class="t" style="left:931.67px;top:431px;font-size:12px;color:#222222;transform:scaleX(0.9341);">0.30</span>
<span class="t" style="left:998.6px;top:431.8px;font-size:12px;color:#222222;transform:scaleX(0.9368);">$-9.11</span>
<span class="t" style="left:1108.06px;top:431.8px;font-size:12px;color:#222222;transform:scaleX(0.9647);">06/13/2022</span>
<span class="t" style="left:1273.5px;top:431.8px;font-size:12px;color:#222222;transform:scaleX(0.8867);">$0.00</span>
<span class="t" style="left:330.75px;top:492.8px;font-size:12px;color:#0b5f99;transform:scaleX(0.984);">su@bcm</span>
<span class="t" style="left:387.92px;top:492.8px;font-size:12px;color:#0b5f99;transform:scaleX(0.9561);">CR-0000624</span>
<span class="t" style="left:462.56px;top:492.8px;font-size:12px;color:#222222;transform:scaleX(0.9697);">07/18/2022</span>
<span class="t" style="left:552.69px;top:492.8px;font-size:12px;color:#0b5f99;transform:scaleX(0.9531);">BLUM</span>
<span class="t" style="left:630.8px;top:492.8px;font-size:12px;color:#222222;transform:scaleX(0.942);">$-10.00</span>
<span class="t" style="left:704.64px;top:492.8px;font-size:12px;color:#222222;transform:scaleX(0.9288);">3.00 %</span>
<span class="t" style="left:923.7px;top:492px;font-size:12px;color:#222222;transform:scaleX(0.6963);">$</span>
<span class="t" style="left:931.66px;top:492px;font-size:12px;color:#222222;transform:scaleX(0.9626);">-0.30</span>
<span class="t" style="left:998.6px;top:492.8px;font-size:12px;color:#222222;transform:scaleX(0.9074);">$-10.00</span>
<span class="t" style="left:1108.06px;top:492.8px;font-size:12px;color:#222222;transform:scaleX(0.9647);">07/18/2022</span>
<span class="t" style="left:313.2px;top:553.8px;font-size:12px;color:#0b5f99;transform:scaleX(1.0051);">test</span>
<span class="t" style="left:387.65px;top:553.8px;font-size:12px;color:#0b5f99;transform:scaleX(0.9943);">I-0028780</span>
<span class="t" style="left:462.56px;top:553.8px;font-size:12px;color:#222222;transform:scaleX(0.9697);">07/21/2022</span>
<span class="t" style="left:552.91px;top:553.8px;font-size:12px;color:#0b5f99;transform:scaleX(0.9732);">Customer1</span>
<span class="t" style="left:630.8px;top:553.8px;font-size:12px;color:#222222;transform:scaleX(0.9302);">$300.00</span>
<span class="t" style="left:704.64px;top:553.8px;font-size:12px;color:#222222;transform:scaleX(0.9288);">3.00 %</span>
<span class="t" style="left:923.7px;top:553px;font-size:12px;color:#222222;transform:scaleX(0.6963);">$</span>
<span class="t" style="left:931.43px;top:553px;font-size:12px;color:#222222;transform:scaleX(0.9444);">9.00</span>
<span class="t" style="left:998.6px;top:553.8px;font-size:12px;color:#222222;transform:scaleX(0.8912);">$234.00</span>
<span class="t" style="left:1108.06px;top:553.8px;font-size:12px;color:#222222;transform:scaleX(0.9647);">07/21/2022</span>
<span class="t" style="left:1273.5px;top:553.8px;font-size:12px;color:#222222;transform:scaleX(0.8867);">$0.00</span>
<span class="t" style="left:313.2px;top:585.8px;font-size:12px;color:#0b5f99;transform:scaleX(1.0051);">test</span>
<span class="t" style="left:387.65px;top:585.8px;font-size:12px;color:#0b5f99;transform:scaleX(0.9943);">I-0028899</span>
<span class="t" style="left:462.56px;top:585.8px;font-size:12px;color:#222222;transform:scaleX(0.9697);">08/08/2022</span>
<span class="t" style="left:553.4px;top:585.8px;font-size:12px;color:#0b5f99;transform:scaleX(1.0128);">Walk-in</span>
<span class="t" style="left:630.8px;top:585.8px;font-size:12px;color:#222222;transform:scaleX(0.9219);">$24.00</span>
<span class="t" style="left:704.64px;top:585.8px;font-size:12px;color:#222222;transform:scaleX(0.9288);">3.00 %</span>
<span class="t" style="left:923.7px;top:585px;font-size:12px;color:#222222;transform:scaleX(0.6963);">$</span>
<span class="t" style="left:931.67px;top:585px;font-size:12px;color:#222222;transform:scaleX(0.9341);">0.72</span>
<span class="t" style="left:998.6px;top:585.8px;font-size:12px;color:#222222;transform:scaleX(0.913);">$-43.87</span>
<span class="t" style="left:1108.06px;top:585.8px;font-size:12px;color:#222222;transform:scaleX(0.9647);">08/08/2022</span>
<span class="t" style="left:1273.5px;top:585.8px;font-size:12px;color:#222222;transform:scaleX(0.8904);">$12.30</span>
<span class="t" style="left:313.0px;top:454.6px;font-size:12px;color:#111111;font-weight:700;letter-spacing:-0.2px;">Joseph</span>
<span class="t" style="left:312.9px;top:469.6px;font-size:12px;color:#111111;font-weight:700;letter-spacing:-0.2px;">Klein</span>
<span class="t" style="left:630.8px;top:462.8px;font-size:12px;color:#222222;transform:scaleX(0.9255);">$3,251.02</span>
<span class="t" style="left:923.7px;top:462px;font-size:12px;color:#111111;font-weight:700;transform:scaleX(0.7704);">$</span>
<span class="t" style="left:931.9px;top:462px;font-size:12px;color:#111111;font-weight:700;transform:scaleX(1.0252);">49.53</span>
<span class="t" style="left:312.77px;top:523px;font-size:12px;color:#111111;font-weight:700;transform:scaleX(0.9333);">su@bcm</span>
<span class="t" style="left:630.8px;top:523px;font-size:12px;color:#222222;transform:scaleX(0.942);">$-10.00</span>
<span class="t" style="left:923.7px;top:522.2px;font-size:12px;color:#111111;font-weight:700;transform:scaleX(0.7704);">$</span>
<span class="t" style="left:931.63px;top:522.2px;font-size:12px;color:#111111;font-weight:700;transform:scaleX(1.0729);">-0.30</span>
<span class="t" style="left:313.2px;top:616px;font-size:12px;color:#111111;font-weight:700;transform:scaleX(1.014);">test</span>
<span class="t" style="left:630.8px;top:616px;font-size:12px;color:#222222;transform:scaleX(0.9302);">$324.00</span>
<span class="t" style="left:923.7px;top:615.2px;font-size:12px;color:#111111;font-weight:700;transform:scaleX(0.7704);">$</span>
<span class="t" style="left:931.64px;top:615.2px;font-size:12px;color:#111111;font-weight:700;transform:scaleX(1.033);">9.72</span>
<span class="t" style="left:1006.37px;top:698.9px;font-size:13px;color:#222222;transform:scaleX(0.9374);">Total Order Amount:</span>
<span class="t" style="left:1117.06px;top:698.9px;font-size:13px;color:#111111;font-weight:700;transform:scaleX(0.9483);">$33,907.94</span>
<span class="t" style="left:1189.77px;top:698.9px;font-size:13px;color:#222222;transform:scaleX(0.9203);">Total Commission:</span>
<span class="t" style="left:1290.06px;top:698.9px;font-size:13px;color:#111111;font-weight:700;transform:scaleX(0.9455);">$1,017.24</span>
<div style="position:absolute;left:321.5px;top:458.4px;width:329px;height:22px;background:#f1f1f7;border:1px solid #767676;"></div>
<svg style="left:360px;top:480px" width="30" height="56" viewBox="0 0 30 56"><path d="M21.6 50.6L9.3 16.4" stroke="#fb0a0a" stroke-width="2.8" stroke-linecap="round"/><path d="M5.2 3.4L5.2 17.5L13.8 15.3Z" fill="#fb0a0a"/></svg>
<div style="position:absolute;left:1351px;top:86px;width:14px;height:643px;background:#686868"></div>
<div style="position:absolute;left:1355px;top:101px;width:7px;height:561px;background:#dadada"></div>
<svg style="left:1354px;top:91px" width="9" height="6" viewBox="0 0 9 6" fill="none" stroke="#a9a9a9" stroke-width="1.2"><path d="M0.5 5.3L4.5 1L8.5 5.3"/></svg>
<svg style="left:1354.5px;top:717.5px" width="8" height="5.5" viewBox="0 0 9 6" fill="none" stroke="#c4c4c4" stroke-width="1.3"><path d="M0.5 0.7L4.5 5L8.5 0.7"/></svg>
<span class="t" style="left:327.31px;top:460.7px;font-size:12px;color:#1c1c30;transform:scaleX(0.9899);">Sales Rep is not configured. It will be skipped on bill creation</span>
</div>
</body></html>
